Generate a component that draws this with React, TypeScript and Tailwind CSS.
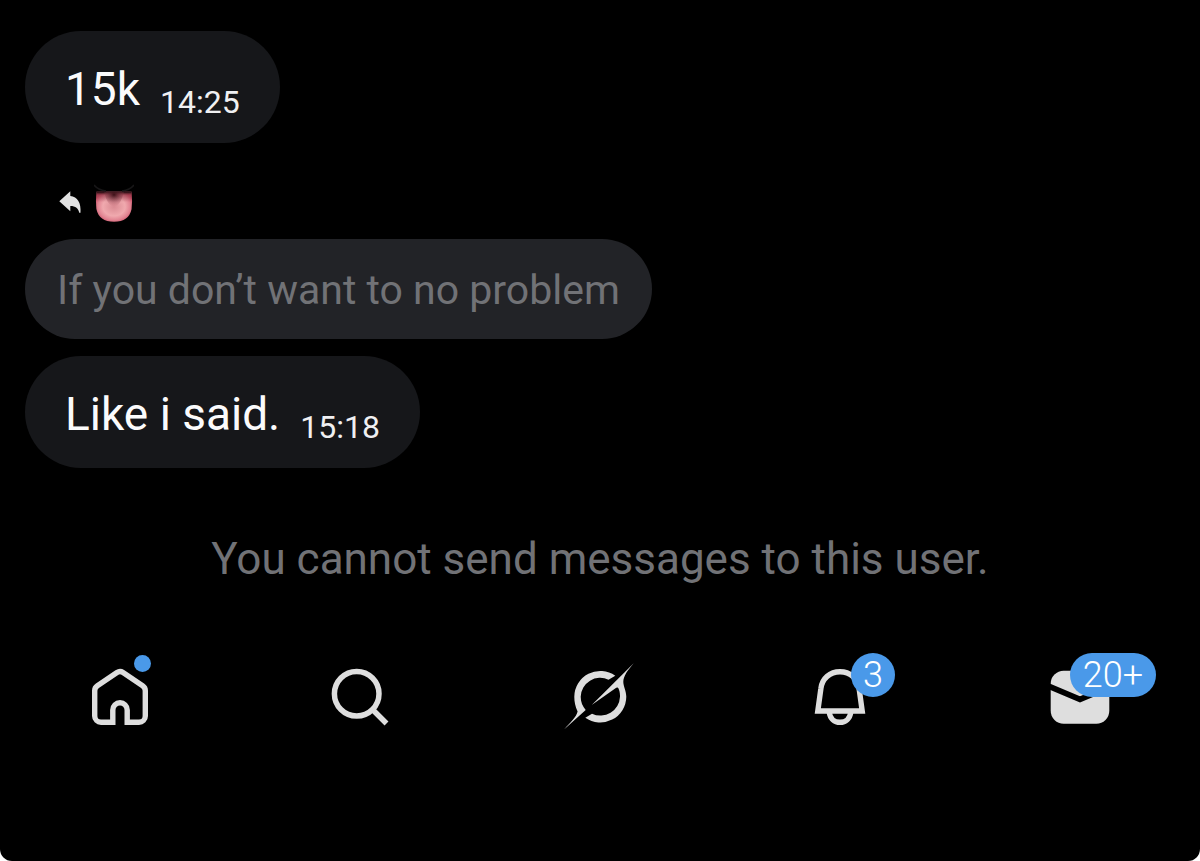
import type { ReactNode } from 'react';

function Bubble({ text, time }: { text: string; time: string }) {
  return (
    <article className="flex h-28 w-fit items-center rounded-[56px] bg-[#16171a] px-10 pt-1 text-[#fbfbfc]">
      <p className="flex items-baseline gap-5 text-[46px] leading-none">
        {text}
        <time className="translate-y-2 text-[32px] leading-none text-[#f0f0f2]">{time}</time>
      </p>
    </article>
  );
}

function ReplyIcon() {
  return (
    <svg className="size-6" viewBox="0 0 24 24" fill="#e2e2e2" aria-hidden="true">
      <path d="M1.3 10.2 12.3.2V5.1C19.5 6 23.3 12 22.5 21.8h-1.3C20.6 17.5 17.5 14.9 12.3 14.9v5.3z" />
    </svg>
  );
}

function TongueIcon() {
  return (
    <svg className="size-10" viewBox="0 0 40 40" role="img" aria-label="Tongue">
      <defs>
        <radialGradient id="tongue" cx="50%" cy="50%" r="56%">
          <stop offset="0" stopColor="#d98a92" />
          <stop offset="0.55" stopColor="#f0a9ae" />
          <stop offset="0.8" stopColor="#e18492" />
          <stop offset="1" stopColor="#d0536b" />
        </radialGradient>
        <linearGradient id="shade" x1="0" y1="0" x2="0" y2="1">
          <stop offset="0" stopColor="#000" />
          <stop offset="0.12" stopColor="#7a2836" stopOpacity="0.5" />
          <stop offset="0.35" stopColor="#7a2836" stopOpacity="0" />
        </linearGradient>
        <radialGradient id="groove" cx="50%" cy="20%" r="70%">
          <stop offset="0" stopColor="#30090f" stopOpacity="0.9" />
          <stop offset="1" stopColor="#a8485a" stopOpacity="0" />
        </radialGradient>
      </defs>
      <path d="M2.6 8.5H37.4Q38.6 18 37.6 26Q35 38.7 20 38.7T2.4 26Q1.4 18 2.6 8.5Z" fill="url(#tongue)" />
      <path d="M2.6 8.5H37.4Q38.6 18 37.6 26Q35 38.7 20 38.7T2.4 26Q1.4 18 2.6 8.5Z" fill="url(#shade)" />
      <path d="M10 8.5H30Q27 22 20 25Q13 22 10 8.5Z" fill="url(#groove)" />
      <path d="M0 2Q4 7 12 8M40 2Q36 7 28 8" fill="none" stroke="#171617" strokeWidth="1.6" />
    </svg>
  );
}

const iconClass = 'size-20';

function HomeIcon() {
  return (
    <svg className={iconClass} viewBox="0 0 80 80" fill="none" stroke="#dedede" strokeWidth="5.4" aria-hidden="true">
      <path d="M32.8 65.3H21a6.3 6.3 0 0 1-6.3-6.3V33.8q0-3.2 2.7-5L37 15.5q3-2 6 0l19.6 13.3q2.7 1.8 2.7 5V59a6.3 6.3 0 0 1-6.3 6.3H47.2V53a7.2 7.2 0 0 0-14.4 0z" />
    </svg>
  );
}

function SearchIcon() {
  return (
    <svg className={iconClass} viewBox="0 0 80 80" fill="none" stroke="#dedede" strokeWidth="5.5" aria-hidden="true">
      <circle cx="36.7" cy="36.7" r="22.3" />
      <path d="M52.5 52.5 66.5 66.5" />
    </svg>
  );
}

function GrokIcon() {
  return (
    <svg className={iconClass} viewBox="0 0 80 80" fill="#dedede" aria-hidden="true">
      <path d="M4.3 72.3C10 65.5 16.5 60 17.6 54.5 15.2 49.5 14.3 44.5 14.3 39.7A26 26 0 0 1 55.3 18.7L48.5 22.7A19.5 19.5 0 0 0 20.7 39.7C20.7 45 22.5 49 25.7 53Z" />
      <path d="M73.7 6.3 31.7 48 55.5 31.2C57 30 58.2 30.5 58.7 32 60 35 60 38 60 39.7A19.7 19.7 0 0 1 32 56.7L25.3 60.7A26 26 0 0 0 66.3 39.7C66.3 34 63.5 30 63.3 25 63.3 19 68 13 73.7 6.3Z" />
    </svg>
  );
}

function BellIcon() {
  return (
    <svg className={iconClass} viewBox="0 0 80 80" fill="none" stroke="#dedede" strokeWidth="5.4" aria-hidden="true">
      <path d="M17.8 54 20.9 31.5C22 21.5 30 14.7 40 14.7S58 21.5 59.1 31.5L62.2 54Z" />
      <path d="M29.3 55.5C30 61.5 34.5 65.3 40 65.3S50 61.5 50.7 55.5" />
    </svg>
  );
}

function MailIcon() {
  return (
    <svg className={iconClass} viewBox="0 0 80 80" aria-hidden="true">
      <rect x="10.7" y="13.7" width="58.6" height="53" rx="13" fill="#dedede" />
      <path d="M8 28.8 40 42.4 72 28.8" fill="none" stroke="#000" strokeWidth="5.8" />
    </svg>
  );
}

function NavItem({ label, icon, badge }: { label: string; icon: ReactNode; badge?: ReactNode }) {
  return (
    <a href="#" aria-label={label} className="flex justify-center">
      <span className="relative">
        {icon}
        {badge}
      </span>
    </a>
  );
}

const badgeClass =
  'absolute -top-1 flex h-11 items-center justify-center rounded-full bg-[#4a99e9] text-4xl leading-none font-light text-white';

export default function App() {
  return (
    <div className="min-h-screen bg-white">
      <div className="min-h-screen overflow-hidden rounded-b-xl bg-black font-['Roboto','Liberation_Sans',sans-serif]">
        <main className="px-[25px] pt-[31px]">
          <Bubble text="15k" time="14:25" />
          <div className="mt-10 mb-4 flex items-center gap-3 pl-[33px]">
            <ReplyIcon />
            <TongueIcon />
          </div>
          <blockquote className="mb-[17px] flex h-25 w-fit items-center rounded-[50px] bg-[#222327] px-8 pt-0.5 text-[41px] leading-none text-[#717276]">
            If you don’t want to no problem
          </blockquote>
          <Bubble text="Like i said." time="15:18" />
          <p className="mt-16 text-center text-[44px] leading-[54px] text-[#717276]">
            You cannot send messages to this user.
          </p>
        </main>
        <nav className="mt-[71px] grid grid-cols-5">
          <NavItem
            label="Home"
            icon={<HomeIcon />}
            badge={<span className="absolute top-[-2px] right-[9px] size-[17px] rounded-full bg-[#4a99e9]" />}
          />
          <NavItem label="Search" icon={<SearchIcon />} />
          <NavItem label="Grok" icon={<GrokIcon />} />
          <NavItem
            label="Notifications"
            icon={<BellIcon />}
            badge={<span className={`${badgeClass} left-[51px] w-11`}>3</span>}
          />
          <NavItem
            label="Messages"
            icon={<MailIcon />}
            badge={<span className={`${badgeClass} left-[30px] w-[86px]`}>20+</span>}
          />
        </nav>
      </div>
    </div>
  );
}
